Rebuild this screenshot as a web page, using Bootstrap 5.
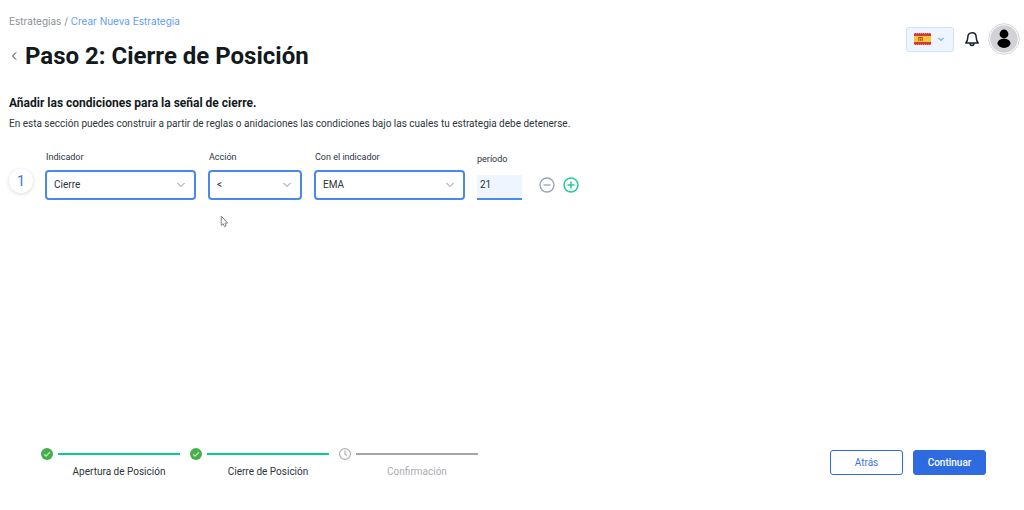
<!DOCTYPE html>
<html lang="es">
<head>
<meta charset="utf-8">
<meta name="viewport" content="width=device-width, initial-scale=1">
<title>Crear Nueva Estrategia</title>
<link href="https://cdn.jsdelivr.net/npm/bootstrap@5.3.0/dist/css/bootstrap.min.css" rel="stylesheet">
<style>
  body { font-family: Roboto, sans-serif; font-size: 10px; line-height: 14px; color: #2c353a; background: #fff; }
  .topbar { padding: 14px 4px 0 9px; }
  .crumbs { font-family: Inter, sans-serif; font-size: 10px; line-height: 14px; color: #8b8f93; }
  .crumbs a { color: #5f9cf5; }
  .page-title { font-size: 24px; line-height: 32px; font-weight: 700; color: #12191d; }
  .back-link { width: 10px; margin-right: 6px; color: #222; }
  .tools { padding-top: 9px; }
  .lang-btn { width: 48px; height: 25px; background: #eef5ff; border: 1px solid #cfe1fc; border-radius: 3px; }
  .lang-flag { margin-left: 7px; margin-right: 7px; }
  .bell-btn { width: 16px; height: 18px; margin: 2px 8px 0 10px; }
  .avatar-btn { width: 32px; height: 32px; }
  .content { padding: 23px 9px 0; }
  .section-title { font-size: 12px; line-height: 16px; font-weight: 700; color: #12191d; }
  .intro { margin-top: 6px; }
  .rule-row { margin-top: 19px; }
  .rule-number { width: 24px; height: 24px; margin: 19px 12px 0 0; font-size: 15px; color: #3d7af0; box-shadow: 0 1px 4px rgba(0,0,0,.16); }
  .field { margin-right: 12px; }
  .field label { display: block; font-size: 9px; line-height: 14px; padding-left: 1px; margin-bottom: 6px; }
  .field .form-select { height: 30px; padding: 0 28px 0 7px; font-size: 10px; line-height: 14px; color: #2c353a; border: 2px solid #4a88ee; border-radius: 4px;
    background-size: 8px 8px; background-position: right 9px center;
    background-image: url("data:image/svg+xml,%3csvg xmlns='http://www.w3.org/2000/svg' viewBox='0 0 8 8'%3e%3cpath fill='none' stroke='%23868d94' d='M.5 2 4 5.500l3.500-3.500'/%3e%3c/svg%3e"); }
  .wide { width: 151px; }
  .narrow { width: 94px; }
  .period { width: 45px; margin-right: 17px; padding-top: 2px; }
  .period label { padding-left: 0; margin-bottom: 9px; }
  .period .form-control { height: 25px; padding: 0 3px 4px; font-size: 10px; line-height: 14px; color: #2c353a; background: #eff5ff; border: 0; border-bottom: 2px solid #4a88ee; border-radius: 0; }
  .rule-actions { margin-top: 27px; gap: 8px; }
  .bottom { padding: 0 38px 31px 41px; }
  .steps { gap: 10px; }
  .step { width: 139px; display: grid; grid-template-columns: 12px 1fr; column-gap: 5px; row-gap: 5px; align-items: center; }
  .step-line { height: 2px; background: #0ccb90; }
  .step-label { grid-column: 2; text-align: center; }
  .pending { color: #aaadaf; }
  .pending .step-line { background: #a5a5a5; }
  .action-btn { width: 73px; height: 25px; padding: 0; font-size: 10px; line-height: 14px; border: 1px solid #2e6be0; border-radius: 3px; }
  .action-btn.btn-primary { background: #2e6be0; font-weight: 500; }
  .action-btn.btn-outline-primary { color: #3d75e2; }
  .pointer { left: 220px; top: 215px; pointer-events: none; }
  .actions { gap: 10px; }
  svg { display: block; }
</style>
</head>
<body>
<div class="d-flex flex-column min-vh-100 position-relative">
  <header class="topbar d-flex justify-content-between align-items-start">
    <div>
      <nav class="crumbs" aria-label="Ruta">Estrategias / <a href="#" class="text-decoration-none">Crear Nueva Estrategia</a></nav>
      <div class="d-flex align-items-center pt-2 mt-1">
        <a href="#" class="back-link" aria-label="Volver"><svg width="10" height="10" viewBox="0 0 10 10" fill="none" stroke="currentColor"><path d="M7 1.500 3.500 5 7 8.500"/></svg></a>
        <h1 class="page-title mb-0">Paso 2: Cierre de Posición</h1>
      </div>
    </div>
    <div class="tools d-flex align-items-center">
      <button type="button" class="lang-btn d-flex align-items-center p-0" aria-label="Idioma">
        <svg class="lang-flag" width="17" height="12" viewBox="0 0 17 12"><path fill="#f8c63d" d="M0 0h17v12H0z"/><path fill="#d23a32" d="M0 0h17v3H0zM0 9h17v3H0z"/><path stroke="#e58a80" stroke-dasharray="1 1" d="M0 .5h17M0 11.500h17"/><path fill="#d9652b" d="M4 4h1v4H4zM8 4h1v4H8z"/><path fill="#b5482f" d="M5 4h3v1H5zM5.500 5.500h2v2.300h-2z"/></svg>
        <svg width="6" height="6" viewBox="0 0 6 6" fill="none" stroke="#74aafa" stroke-width="1.200"><path d="M.5 1.800 3 4.300l2.500-2.500"/></svg>
      </button>
      <button type="button" class="bell-btn btn p-0 border-0" aria-label="Notificaciones"><svg width="16" height="18" viewBox="0 0 16 18" fill="none" stroke="#17242c" stroke-width="1.500" stroke-linejoin="round" stroke-linecap="round"><path d="M8 1.800C5.300 1.800 3.800 3.700 3.800 6.200c0 2.600-.5 4-2 5.800h12.400c-1.500-1.800-2-3.200-2-5.800 0-2.500-1.500-4.400-4.200-4.400zM6 12.300c0 2.800 4 2.800 4 0"/></svg></button>
      <button type="button" class="avatar-btn btn p-0 border-0" aria-label="Perfil"><svg width="32" height="32" viewBox="0 0 32 32"><circle cx="16" cy="16" r="15.300" fill="#fff" stroke="#d4d4d6"/><circle cx="16" cy="16" r="13.800" fill="#d2d2d6"/><circle cx="16" cy="11" r="4.400"/><ellipse cx="16" cy="20.300" rx="6.500" ry="4.600"/></svg></button>
    </div>
  </header>

  <main class="content">
    <h2 class="section-title mb-0">Añadir las condiciones para la señal de cierre.</h2>
    <p class="intro mb-0">En esta sección puedes construir a partir de reglas o anidaciones las condiciones bajo las cuales tu estrategia debe detenerse.</p>
    <form class="rule-row d-flex flex-wrap align-items-start">
      <div class="rule-number rounded-circle d-flex align-items-center justify-content-center">1</div>
      <div class="field wide"><label for="indicador">Indicador</label><select id="indicador" class="form-select"><option>Cierre</option></select></div>
      <div class="field narrow"><label for="accion">Acción</label><select id="accion" class="form-select"><option>&lt;</option></select></div>
      <div class="field wide"><label for="con">Con el indicador</label><select id="con" class="form-select"><option>EMA</option></select></div>
      <div class="field period"><label for="periodo">período</label><input id="periodo" type="text" class="form-control" value="21"></div>
      <div class="rule-actions d-flex">
        <button type="button" class="btn p-0 border-0" aria-label="Quitar"><svg width="16" height="16" viewBox="0 0 16 16" fill="none" stroke="#9aa3b5" stroke-width="1.300"><circle cx="8" cy="8" r="7"/><path d="M4.500 8h7"/></svg></button>
        <button type="button" class="btn p-0 border-0" aria-label="Añadir"><svg width="16" height="16" viewBox="0 0 16 16" fill="none" stroke="#1fcf98" stroke-width="1.500"><circle cx="8" cy="8" r="7"/><path d="M4.500 8h7M8 4.500v7"/></svg></button>
      </div>
    </form>
  </main>

  <footer class="bottom mt-auto d-flex flex-wrap justify-content-between align-items-end">
    <div class="steps d-flex">
      <div class="step">
        <svg width="12" height="12" viewBox="0 0 12 12" fill="none"><circle cx="6" cy="6" r="6" fill="#46ae4c"/><path d="m3.200 6.200 1.900 1.900 3.800-3.800" stroke="#b9efa5" stroke-width="1.300"/></svg>
        <div class="step-line"></div><div class="step-label">Apertura de Posición</div>
      </div>
      <div class="step">
        <svg width="12" height="12" viewBox="0 0 12 12" fill="none"><circle cx="6" cy="6" r="6" fill="#46ae4c"/><path d="m3.200 6.200 1.900 1.900 3.800-3.800" stroke="#b9efa5" stroke-width="1.300"/></svg>
        <div class="step-line"></div><div class="step-label">Cierre de Posición</div>
      </div>
      <div class="step pending">
        <svg width="12" height="12" viewBox="0 0 12 12" fill="none" stroke="#b0b0b0" stroke-width="1.200"><circle cx="6" cy="6" r="5.400"/><path d="M6 2.500v3.700l2 1.300"/></svg>
        <div class="step-line"></div><div class="step-label">Confirmación</div>
      </div>
    </div>
    <div class="actions d-flex mb-1">
      <button type="button" class="action-btn btn btn-outline-primary">Atrás</button>
      <button type="button" class="action-btn btn btn-primary">Continuar</button>
    </div>
  </footer>

  <svg class="pointer position-absolute" width="9" height="13" viewBox="0 0 9 13" fill="#fff" stroke="#83858c" stroke-linejoin="round" aria-hidden="true"><path d="M1.200 1v9.500l2-1.800 1.300 3 1.700-.8-1.300-2.800h2.800z"/></svg>
</div>
<script src="https://cdn.jsdelivr.net/npm/bootstrap@5.3.0/dist/js/bootstrap.bundle.min.js"></script>
</body>
</html>
